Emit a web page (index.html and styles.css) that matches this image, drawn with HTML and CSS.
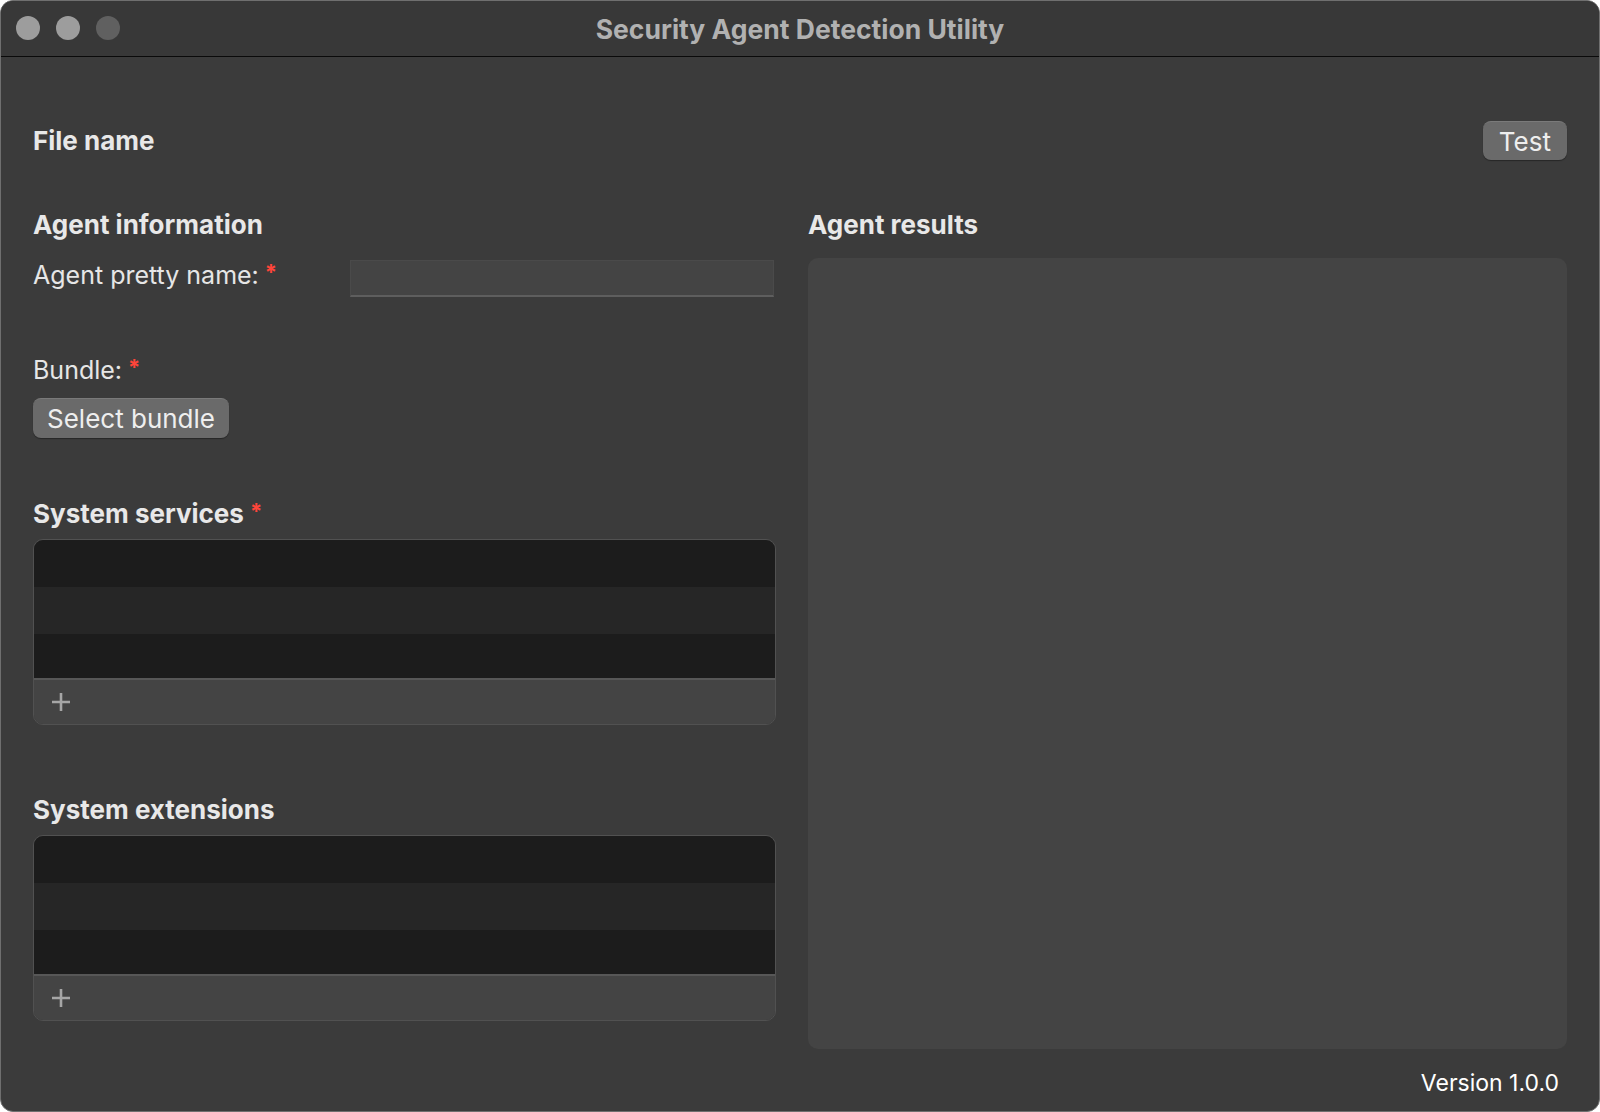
FILE: index.html
```html
<!DOCTYPE html>
<html lang="en">
<head>
  <meta charset="UTF-8">
  <meta name="viewport" content="width=device-width, initial-scale=1.0">
  <title>Security Agent Detection Utility</title>
  <link rel="stylesheet" href="styles.css">
</head>
<body>
  <div class="window">
    <header class="titlebar">
      <div class="lights">
        <span class="light"></span>
        <span class="light"></span>
        <span class="light off"></span>
      </div>
      <div class="title">Security Agent Detection Utility</div>
    </header>

    <main class="content">
      <div class="top-row">
        <h2 class="heading">File name</h2>
        <button class="btn">Test</button>
      </div>

      <div class="columns">
        <section class="left">
          <h2 class="heading">Agent information</h2>
          <div class="field">
            <label class="label">Agent pretty name:<span class="req">*</span></label>
            <input class="input" type="text">
          </div>

          <label class="label bundle-label">Bundle:<span class="req">*</span></label>
          <button class="btn select-btn">Select bundle</button>

          <h2 class="heading services-heading">System services<span class="req">*</span></h2>
          <div class="list">
            <div class="row row-dark"></div>
            <div class="row row-alt"></div>
            <div class="row row-dark row-last"></div>
            <div class="list-footer">
              <svg class="plus" width="18" height="18" viewBox="0 0 18 18">
                <path d="M9 0v18M0 9h18" stroke="#a6a6a6" stroke-width="2.6"/>
              </svg>
            </div>
          </div>

          <h2 class="heading extensions-heading">System extensions</h2>
          <div class="list">
            <div class="row row-dark"></div>
            <div class="row row-alt"></div>
            <div class="row row-dark row-last"></div>
            <div class="list-footer">
              <svg class="plus" width="18" height="18" viewBox="0 0 18 18">
                <path d="M9 0v18M0 9h18" stroke="#a6a6a6" stroke-width="2.6"/>
              </svg>
            </div>
          </div>
        </section>

        <section class="right">
          <h2 class="heading">Agent results</h2>
          <div class="results"></div>
          <div class="version">Version 1.0.0</div>
        </section>
      </div>
    </main>
  </div>
</body>
</html>
```

FILE: styles.css
```css
html, body {
  margin: 0;
  background: #ffffff;
}
body {
  font-family: Inter, "Noto Sans", sans-serif;
  color: #e6e6e6;
}
.window {
  width: 1600px;
  height: 1112px;
  box-sizing: border-box;
  border: 1px solid #6f6f6f;
  border-radius: 13px;
  background: #3b3b3b;
  overflow: hidden;
}
.titlebar {
  height: 55px;
  background: #383838;
  border-bottom: 1px solid #0a0a0a;
  position: relative;
  display: flex;
  align-items: center;
  justify-content: center;
}
.lights {
  position: absolute;
  left: 15px;
  top: 15px;
  display: flex;
  gap: 16px;
}
.light {
  width: 24px;
  height: 24px;
  border-radius: 50%;
  background: #9d9d9d;
}
.light.off {
  background: #606060;
}
.title {
  font-size: 26.5px;
  font-weight: 700;
  color: #b1b1b1;
}
.content {
  padding: 64px 32px 0 32px;
}
.top-row {
  display: flex;
  justify-content: space-between;
  align-items: center;
  height: 39px;
}
.heading {
  margin: 0;
  font-size: 26px;
  font-weight: 700;
  line-height: 30px;
  color: #e8e8e8;
}
.btn {
  font-family: Inter, "Noto Sans", sans-serif;
  font-size: 26px;
  color: #eeeeee;
  background: #6a6a6a;
  border: none;
  border-top: 1px solid #7a7a7a;
  border-radius: 8px;
  height: 39px;
  padding: 0 16px;
  box-shadow: 0 1px 1px rgba(0, 0, 0, 0.35);
}
.columns {
  margin-top: 50px;
  display: grid;
  grid-template-columns: 743px 1fr;
  column-gap: 32px;
}
.left, .right {
  display: flex;
  flex-direction: column;
  align-items: flex-start;
}
.field {
  margin-top: 20px;
  display: flex;
  align-items: flex-start;
  width: 100%;
}
.label {
  font-size: 25px;
  line-height: 30px;
  color: #e6e6e6;
}
.field .label {
  width: 317px;
  flex-shrink: 0;
}
.req {
  color: #ff453a;
  font-size: 22px;
  font-weight: 700;
  line-height: 0;
  margin-left: 6px;
  vertical-align: 4px;
}
.input {
  flex: 1;
  height: 37px;
  box-sizing: border-box;
  margin-right: 2px;
  background: #444444;
  border: 1px solid #4a4a4a;
  border-bottom: 2px solid #5e5e5e;
  outline: none;
}
.bundle-label {
  margin-top: 58px;
}
.select-btn {
  margin-top: 13px;
  height: 40px;
  padding: 0 14px;
}
.services-heading {
  margin-top: 61px;
}
.extensions-heading {
  margin-top: 70px;
}
.list {
  margin-top: 10px;
  width: 100%;
  height: 186px;
  box-sizing: border-box;
  border: 1px solid #515151;
  border-radius: 10px;
  overflow: hidden;
  display: flex;
  flex-direction: column;
}
.row {
  height: 47px;
}
.row-dark {
  background: #1c1c1c;
}
.row-alt {
  background: #262626;
}
.row-last {
  height: 44px;
}
.list-footer {
  flex: 1;
  background: #444444;
  border-top: 2px solid #575757;
  display: flex;
  align-items: center;
  padding-left: 18px;
}
.results {
  margin-top: 18px;
  width: 100%;
  height: 791px;
  background: #444444;
  border-radius: 10px;
}
.version {
  margin-top: 19px;
  align-self: flex-end;
  margin-right: 8px;
  font-size: 23px;
  line-height: 30px;
  color: #ffffff;
}
```
